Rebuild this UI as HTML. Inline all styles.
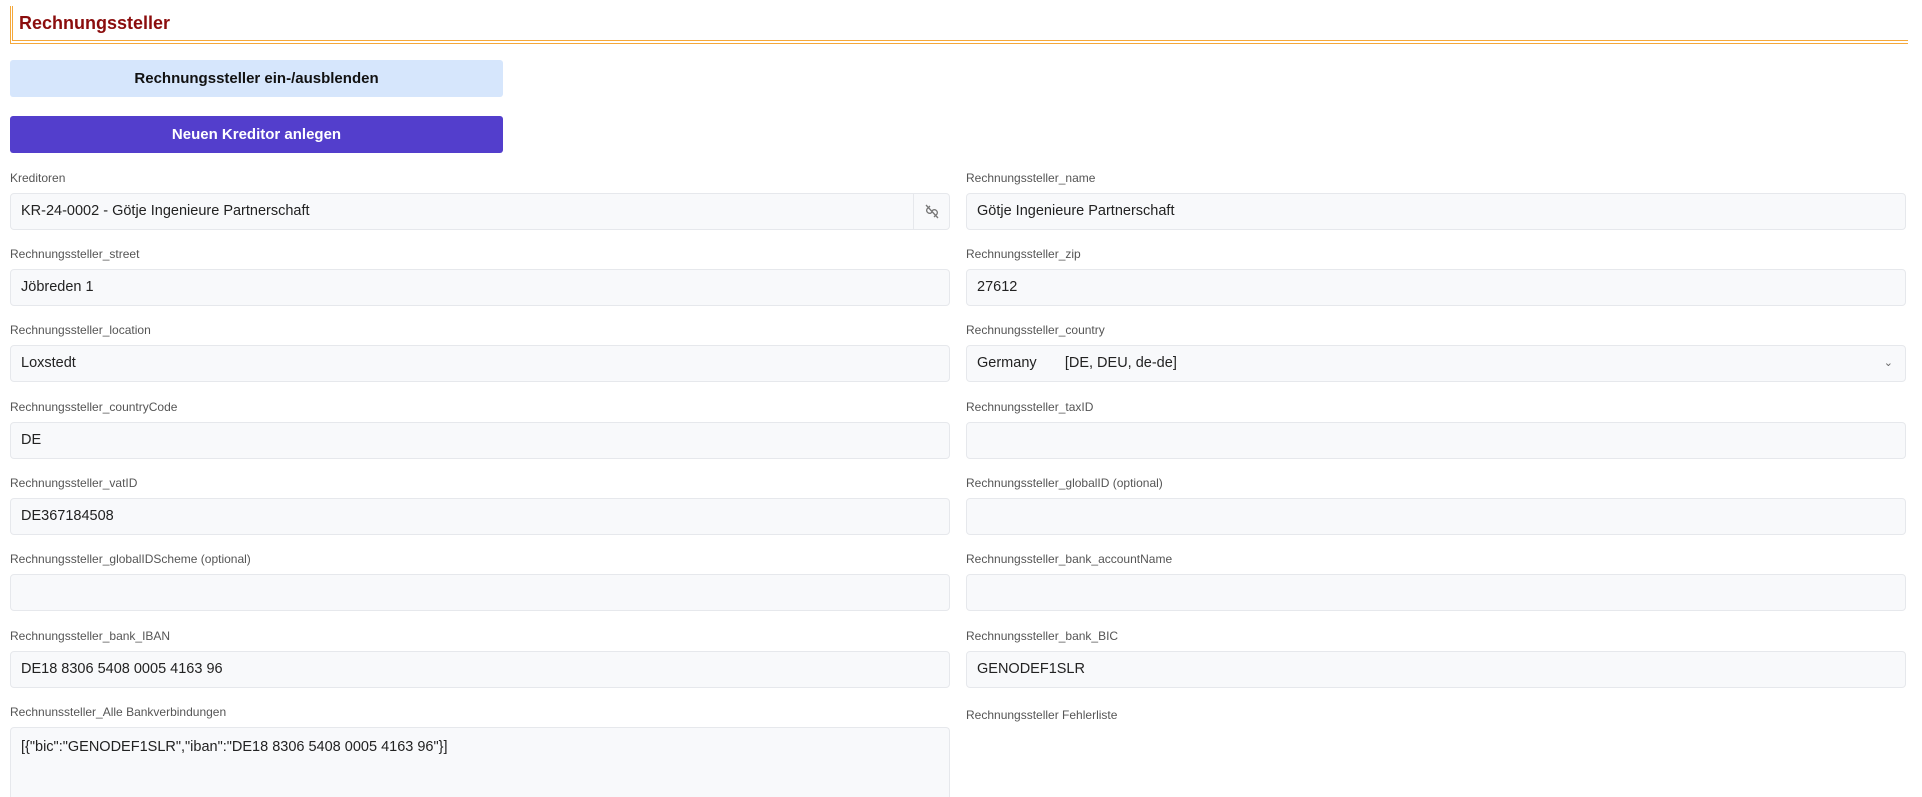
<!DOCTYPE html>
<html style="height:797px;overflow:hidden"><head><meta charset="utf-8"><style>
*{box-sizing:border-box;margin:0;padding:0}
body{width:1922px;height:797px;overflow:hidden;background:#fff;font-family:"Liberation Sans",sans-serif;position:relative}
.title{position:absolute;left:10px;top:6px;width:1898px;height:38px;border-left:3px double #f5a83a;border-bottom:4px double #f5a83a;padding-left:6px;font-size:18px;font-weight:bold;color:#8b0d0d;line-height:34px}
.btn{position:absolute;left:10px;width:493px;height:37px;border-radius:3px;font-size:15px;font-weight:bold;text-align:center;line-height:37px}
.b1{top:60px;background:#d6e6fc;color:#111}
.b2{top:116px;background:#533ecc;color:#fff}
.lbl{position:absolute;font-size:12px;color:#555}
.inp{position:absolute;height:37px;background:#f8f9fb;border:1px solid #e6e8ec;border-radius:4px;font-size:14.5px;color:#222;padding-left:10px;line-height:35px;white-space:nowrap}
</style></head><body>
<div class="title">Rechnungssteller</div>
<div class="btn b1">Rechnungssteller ein-/ausblenden</div>
<div class="btn b2">Neuen Kreditor anlegen</div>

<div class="lbl" style="left:10px;top:171px">Kreditoren</div>
<div class="inp" style="left:10px;top:193px;width:940px">KR-24-0002 - Götje Ingenieure Partnerschaft
<div style="position:absolute;right:0;top:0;width:36px;height:35px;border-left:1px solid #e6e8ec">
<svg width="36" height="35" viewBox="0 0 36 35"><g fill="none" stroke="#777" stroke-width="1.3"><path d="M16 12 l-3 3 a3 3 0 0 0 4 4 l1-1"/><path d="M20 23 l3-3 a3 3 0 0 0-4-4 l-1 1"/><path d="M12 11 L24 24"/></g></svg></div></div>
<div class="lbl" style="left:966px;top:171px">Rechnungssteller_name</div>
<div class="inp" style="left:966px;top:193px;width:940px">Götje Ingenieure Partnerschaft</div>

<div class="lbl" style="left:10px;top:247px">Rechnungssteller_street</div>
<div class="inp" style="left:10px;top:269px;width:940px">Jöbreden 1</div>
<div class="lbl" style="left:966px;top:247px">Rechnungssteller_zip</div>
<div class="inp" style="left:966px;top:269px;width:940px">27612</div>

<div class="lbl" style="left:10px;top:323px">Rechnungssteller_location</div>
<div class="inp" style="left:10px;top:345px;width:940px">Loxstedt</div>
<div class="lbl" style="left:966px;top:323px">Rechnungssteller_country</div>
<div class="inp" style="left:966px;top:345px;width:940px">Germany &nbsp; &nbsp; &nbsp; [DE, DEU, de-de]<span style="position:absolute;right:12px;top:0;font-size:11px;color:#666">&#8964;</span></div>

<div class="lbl" style="left:10px;top:400px">Rechnungssteller_countryCode</div>
<div class="inp" style="left:10px;top:422px;width:940px">DE</div>
<div class="lbl" style="left:966px;top:400px">Rechnungssteller_taxID</div>
<div class="inp" style="left:966px;top:422px;width:940px"></div>

<div class="lbl" style="left:10px;top:476px">Rechnungssteller_vatID</div>
<div class="inp" style="left:10px;top:498px;width:940px">DE367184508</div>
<div class="lbl" style="left:966px;top:476px">Rechnungssteller_globalID (optional)</div>
<div class="inp" style="left:966px;top:498px;width:940px"></div>

<div class="lbl" style="left:10px;top:552px">Rechnungssteller_globalIDScheme (optional)</div>
<div class="inp" style="left:10px;top:574px;width:940px"></div>
<div class="lbl" style="left:966px;top:552px">Rechnungssteller_bank_accountName</div>
<div class="inp" style="left:966px;top:574px;width:940px"></div>

<div class="lbl" style="left:10px;top:629px">Rechnungssteller_bank_IBAN</div>
<div class="inp" style="left:10px;top:651px;width:940px">DE18 8306 5408 0005 4163 96</div>
<div class="lbl" style="left:966px;top:629px">Rechnungssteller_bank_BIC</div>
<div class="inp" style="left:966px;top:651px;width:940px">GENODEF1SLR</div>

<div class="lbl" style="left:10px;top:705px">Rechnunssteller_Alle Bankverbindungen</div>
<div class="inp" style="left:10px;top:727px;width:940px;height:70px;border-bottom:none;border-radius:4px 4px 0 0;line-height:1.4;padding-top:9px">[{"bic":"GENODEF1SLR","iban":"DE18 8306 5408 0005 4163 96"}]</div>
<div class="lbl" style="left:966px;top:708px">Rechnungssteller Fehlerliste</div>
</body></html>
